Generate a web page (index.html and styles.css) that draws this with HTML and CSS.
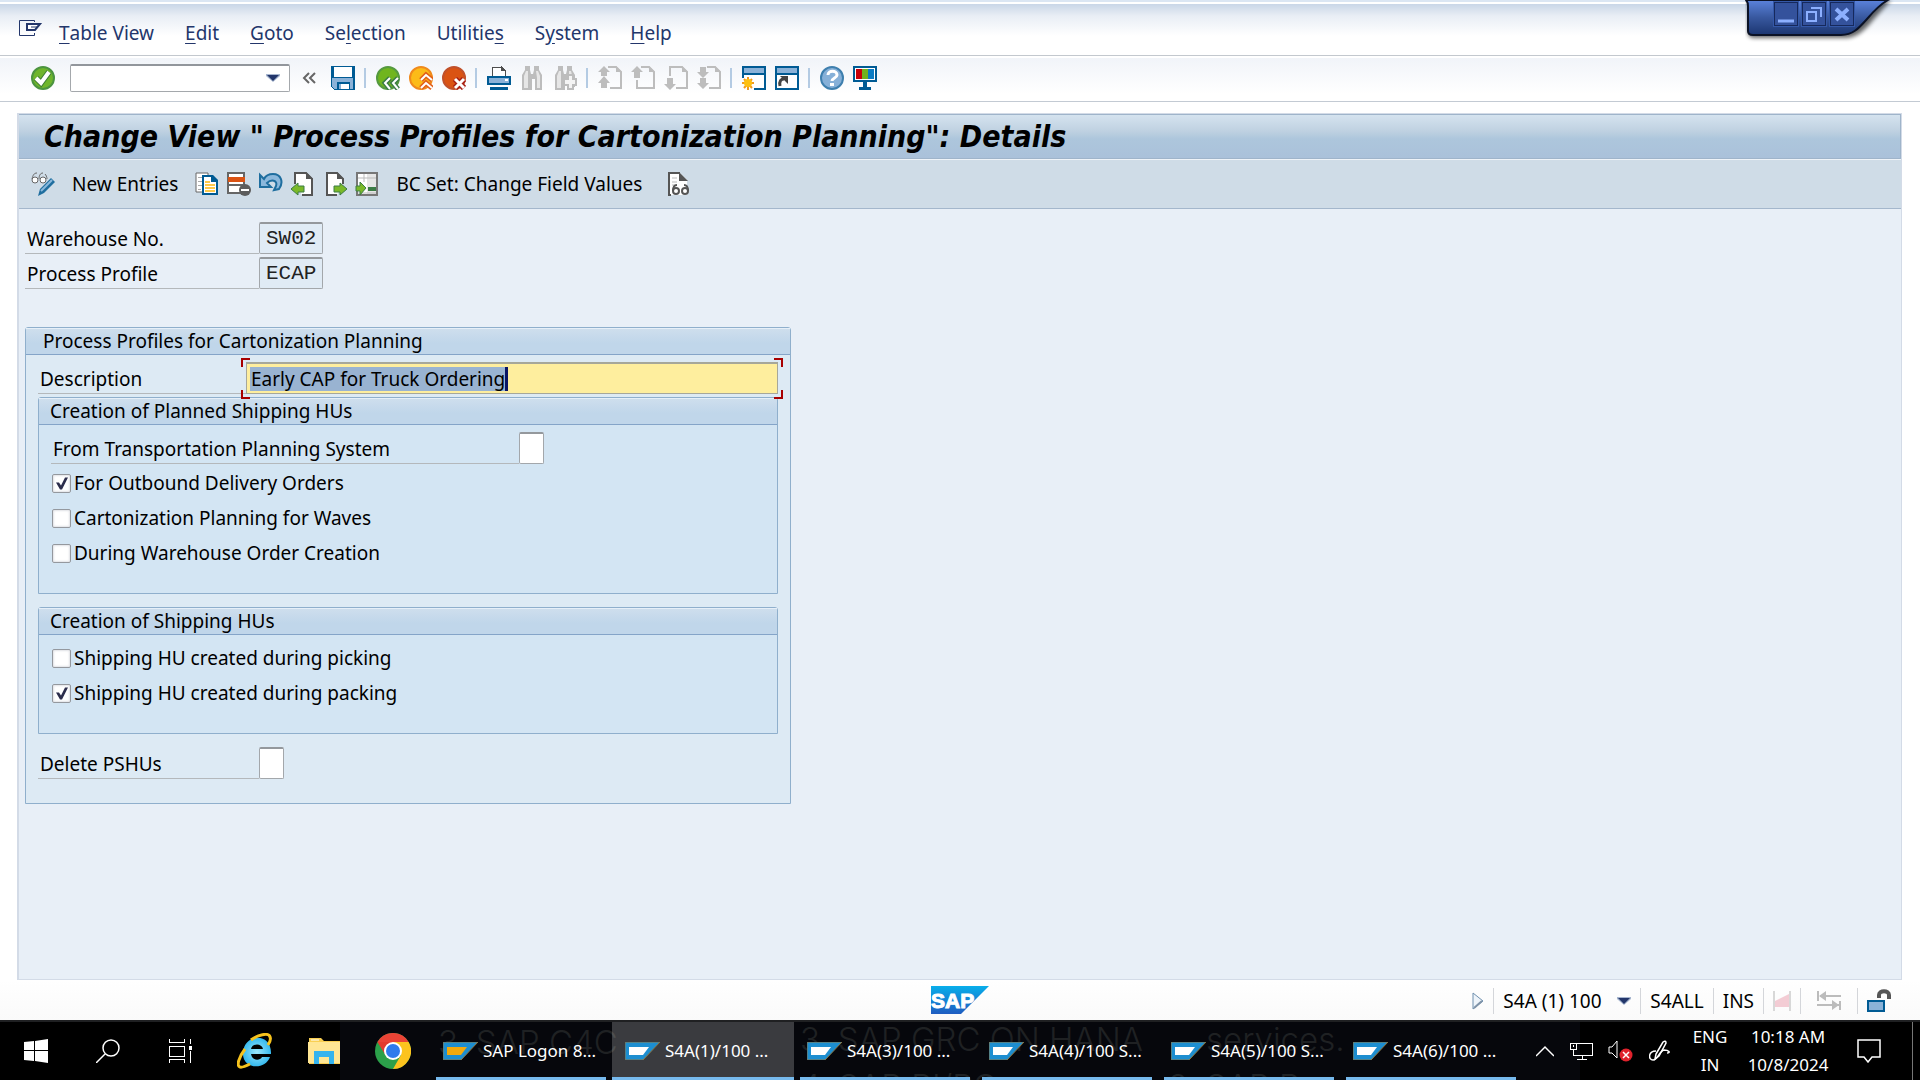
FILE: index.html
```
<!DOCTYPE html>
<html lang="en">
<head>
    <meta charset="UTF-8">
    <meta name="viewport" content="width=device-width, initial-scale=1.0">
    <title>Change View " Process Profiles for Cartonization Planning": Details</title>
    <link rel="stylesheet" href="styles.css">
</head>
<body>
    <main class="sap-window">
        <nav class="menu-bar">
            <button class="menu-icon" aria-label="Window menu">
                <svg width="24" height="18" viewBox="0 0 24 18"><path d="M15.500 3V1.500h-15v15h15V14" fill="none" stroke="#23366b" stroke-width="1"/><path d="M8 5h13l-5 6H8z" fill="#fff" stroke="#23366b" stroke-width="2"/><path d="M12 8h6" stroke="#23366b" stroke-width="1"/></svg>
            </button>
            <button><u>T</u>able View</button>
            <button><u>E</u>dit</button>
            <button><u>G</u>oto</button>
            <button>Se<u>l</u>ection</button>
            <button>Utilitie<u>s</u></button>
            <button>S<u>y</u>stem</button>
            <button><u>H</u>elp</button>
        </nav>

        <div class="toolbar">
            <button aria-label="Enter">
                <svg width="24" height="24" viewBox="0 0 24 24"><circle cx="12" cy="12" r="11" fill="#6fb52c" stroke="#4c9440" stroke-width="2"/><path d="M5 12l5 5 8-11" fill="none" stroke="#3c7c34" stroke-width="6"/><path d="M5 12l5 5 8-11" fill="none" stroke="#fff" stroke-width="4"/></svg>
            </button>
            <div class="command">
                <input type="text" aria-label="Command">
                <button aria-label="Command history">
                    <svg width="14" height="8" viewBox="0 0 14 8"><path d="M0 0h14v2L7 8 0 2z" fill="#a7b6cf"/><path d="M1 1h12L7 7z" fill="#23366b"/></svg>
                </button>
            </div>
            <button class="narrow" aria-label="Hide command field">
                <svg width="14" height="12" viewBox="0 0 14 12"><path d="M7 1L2 6l5 5M13 1L8 6l5 5" fill="none" stroke="#666" stroke-width="2"/></svg>
            </button>
            <button class="save" aria-label="Save">
                <svg width="24" height="24" viewBox="0 0 24 24" shape-rendering="crispEdges"><path d="M0 0h24v24H3l-3-3z" fill="#005b94"/><path d="M1 12h21v11H3l-2-2z" fill="#8bb2d8"/><path d="M3 1h18v10H3z" fill="#fff"/><path d="M6 16h13v8H6z" fill="#005b94"/><path d="M8 18h10v5H8z" fill="#fff"/><path d="M8 18h2v5H8z" fill="#8bb2d8"/></svg>
            </button>
            <span class="sep"></span>
            <button aria-label="Back">
                <svg width="24" height="24" viewBox="0 0 24 24"><circle cx="12" cy="12" r="11" fill="#70b51e" stroke="#559a3f" stroke-width="2"/><path d="M14 12l-5 5 5 6M22 12l-5 5 5 6" fill="none" stroke="#3c7c45" stroke-width="5"/><path d="M14 12l-5 5 5 6M22 12l-5 5 5 6" fill="none" stroke="#fff" stroke-width="2"/></svg>
            </button>
            <button aria-label="Exit">
                <svg width="24" height="24" viewBox="0 0 24 24"><circle cx="12" cy="12" r="11" fill="#fcbb18" stroke="#f08a1c" stroke-width="2"/><path d="M12 14l5-5 6 5M12 22l5-5 6 5" fill="none" stroke="#e2601a" stroke-width="5"/><path d="M12 14l5-5 6 5M12 22l5-5 6 5" fill="none" stroke="#fff" stroke-width="2"/></svg>
            </button>
            <button aria-label="Cancel">
                <svg width="24" height="24" viewBox="0 0 24 24"><circle cx="12" cy="12" r="11" fill="#da5313" stroke="#c0502a" stroke-width="2"/><path d="M13 13l9 9M22 13l-9 9" stroke="#a81f14" stroke-width="6"/><path d="M13 13l9 9M22 13l-9 9" stroke="#fff" stroke-width="3"/></svg>
            </button>
            <span class="sep"></span>
            <button aria-label="Print">
                <svg width="24" height="24" viewBox="0 0 24 24" shape-rendering="crispEdges"><path d="M5 10V1h9l4 4v5" fill="#fff" stroke="#4d4d4d" stroke-width="1"/><path d="M14 0v5h5z" fill="#4d4d4d"/><path d="M0 10h24v9H0z" fill="#005b94"/><path d="M2 12h20v5H2z" fill="#8bb2d8"/><path d="M18 13h3v2h-3z" fill="#fff"/><path d="M3 21h18v3H3z" fill="#005b94"/></svg>
            </button>
            <button aria-label="Find" disabled>
                <svg width="24" height="24" viewBox="0 0 24 24"><path d="M5 0h5v4l1 4h2l1-4V0h5v4l3 5v15h-7V13h-3v11H2V9l3-5z" fill="#bdbdbd"/><path d="M6 5h2v17H4V10zM16 5h2l2 5v12h-3V12z" fill="#e6e6e6"/></svg>
            </button>
            <button aria-label="Find next" disabled>
                <svg width="24" height="24" viewBox="0 0 24 24"><path d="M5 0h5v4l1 4h2l1-4V0h5v4l3 5v12h-7v-8h-3v11H2V9l3-5z" fill="#bdbdbd"/><path d="M6 5h2v17H4V10zM16 5h2l1 4h-3z" fill="#e6e6e6"/><path d="M15 9h5v4h3v6h-3v4h-5v-4h-4v-6h4z" fill="#f4f4f4" stroke="#bdbdbd" stroke-width="2"/></svg>
            </button>
            <span class="sep"></span>
            <button aria-label="First page" disabled>
                <svg width="24" height="24" viewBox="0 0 24 24"><path d="M10 1h8l5 5v16H12" fill="none" stroke="#bdbdbd" stroke-width="2"/><path d="M18 0v6h6zM6 0l6 6H9v4H3V6H0zM6 10l6 7H9v5H3v-5H0z" fill="#bdbdbd"/></svg>
            </button>
            <button aria-label="Previous page" disabled>
                <svg width="24" height="24" viewBox="0 0 24 24"><path d="M10 1h8l5 5v16H6v-8" fill="none" stroke="#bdbdbd" stroke-width="2"/><path d="M18 0v6h6zM6 0l6 6H9v6H3V6H0z" fill="#bdbdbd"/></svg>
            </button>
            <button aria-label="Next page" disabled>
                <svg width="24" height="24" viewBox="0 0 24 24"><path d="M6 10V1h12l5 5v16H12" fill="none" stroke="#bdbdbd" stroke-width="2"/><path d="M18 0v6h6zM3 12h6v6h3l-6 6-6-6h3z" fill="#bdbdbd"/></svg>
            </button>
            <button aria-label="Last page" disabled>
                <svg width="24" height="24" viewBox="0 0 24 24"><path d="M10 1h8l5 5v16H12" fill="none" stroke="#bdbdbd" stroke-width="2"/><path d="M18 0v6h6zM3 1h6v5h3l-6 6-6-6h3zM3 12h6v5h3l-6 6-6-6h3z" fill="#bdbdbd"/></svg>
            </button>
            <span class="sep"></span>
            <button aria-label="Create new session">
                <svg width="24" height="24" viewBox="0 0 24 24"><path d="M0 0h24v24H12v-2h10V9H2v3H0z" fill="#005b94" shape-rendering="crispEdges"/><path d="M2 2h20v5H2z" fill="#8bb2d8"/><path d="M2 9h20v13H2z" fill="#fff"/><path d="M0 8h24v1H0z" fill="#005b94"/><g stroke="#f29a1c" stroke-width="2"><path d="M6 11v13M0 17h12M2 13l8 9M10 13l-8 9"/></g><circle cx="6" cy="17" r="4" fill="#fdc010"/></svg>
            </button>
            <button aria-label="Generate shortcut">
                <svg width="24" height="24" viewBox="0 0 24 24"><path d="M0 0h24v24H0z" fill="#005b94"/><path d="M2 2h20v5H2z" fill="#8bb2d8"/><path d="M2 9h20v13H2z" fill="#fff"/><path d="M5 20c-1-5 1-7 4-7" fill="none" stroke="#444" stroke-width="3"/><path d="M5 10h8v8z" fill="#444"/></svg>
            </button>
            <span class="sep"></span>
            <button aria-label="Help">
                <svg width="24" height="24" viewBox="0 0 24 24"><circle cx="12" cy="12" r="11" fill="#86b0d8" stroke="#3e7fae" stroke-width="2"/><path d="M8 9c0-5 9-5 9 0 0 3-5 3-5 6" fill="none" stroke="#fff" stroke-width="3"/><path d="M10 17h4v3h-4z" fill="#fff"/></svg>
            </button>
            <button aria-label="Customize local layout">
                <svg width="24" height="24" viewBox="0 0 24 24" shape-rendering="crispEdges"><path d="M0 0h24v16H0z" fill="#005b94"/><path d="M2 2h20v12H2z" fill="#fff"/><path d="M3 3h6v10H3z" fill="#c8000a"/><path d="M9 3h6v10H9z" fill="#72b31e"/><path d="M15 3h6v10h-6z" fill="#0a7cc4"/><path d="M10 16h4v5h-4zM6 21h12v3H6z" fill="#005b94"/></svg>
            </button>
        </div>

        <section class="screen">
            <h1>Change View " Process Profiles for Cartonization Planning": Details</h1>
            <div class="app-toolbar">
                <button aria-label="Display/Change">
                    <svg width="24" height="24" viewBox="0 0 24 24"><g fill="none" stroke="#666"><path d="M1 7c1-4 2-6 5-6M8 7c0-3 1-6 4-6M16 7c0-2-1-4-2-5"/><circle cx="4" cy="8" r="3" fill="#fff"/><circle cx="12" cy="8" r="3" fill="#fff"/></g><path d="M7 24l2-7L20 6l4 4-11 11z" fill="#1f6e9f"/><path d="M10 19L21 8" stroke="#8bb8dc" stroke-width="2"/></svg>
                </button>
                <button class="text-button">New Entries</button>
                <button aria-label="Copy as">
                    <svg width="24" height="24" viewBox="0 0 24 24"><path d="M1 1h12v19H1z" fill="#fff" stroke="#666"/><path d="M3 5.500h4M3 9.500h4M3 13.500h4M3 17.500h3" stroke="#aaa"/><path d="M8 4h9l5 5v13H8z" fill="#fff" stroke="#005b94" stroke-width="2"/><path d="M16 3h2l5 5v2h-7z" fill="#005b94"/><path d="M10 10h5M10 13h10M10 16h10M10 19h10" stroke="#fdc94a" stroke-width="2"/></svg>
                </button>
                <button aria-label="Delete">
                    <svg width="24" height="24" viewBox="0 0 24 24"><path d="M1 1h16v20H1z" fill="#fff" stroke="#666" stroke-width="2"/><path d="M1 5h17v5H1z" fill="#da5313"/><path d="M1 13h16" stroke="#666" stroke-width="2"/><circle cx="18" cy="18" r="6" fill="#5c5c5c"/><path d="M14 18h8" stroke="#fff" stroke-width="2"/></svg>
                </button>
                <button aria-label="Undo change">
                    <svg width="24" height="24" viewBox="0 0 24 24"><path d="M1 3v12h11L8 11c4-4 11-3 9 3l-2 4 5-1c5-7 2-15-6-15-4 0-7 1-9 5z" fill="#8bb8dc" stroke="#1f6e9f" stroke-width="2"/></svg>
                </button>
                <button aria-label="Previous entry">
                    <svg width="24" height="24" viewBox="0 0 24 24"><path d="M4 12V1h11l6 6v16H11" fill="#fff" stroke="#555" stroke-width="2"/><path d="M15 0v7h7z" fill="#555"/><path d="M0 17l7-6v3h6v6H7v3z" fill="#7ab929" stroke="#3c7c45"/></svg>
                </button>
                <button aria-label="Next entry">
                    <svg width="24" height="24" viewBox="0 0 24 24"><path d="M20 12V7l-6-6H4v22h10" fill="#fff" stroke="#555" stroke-width="2"/><path d="M14 0v7h7z" fill="#555"/><path d="M24 17l-7-6v3h-6v6h6v3z" fill="#7ab929" stroke="#3c7c45"/></svg>
                </button>
                <button aria-label="Other entry">
                    <svg width="24" height="24" viewBox="0 0 24 24"><path d="M2 1h20v22H2z" fill="#fff" stroke="#777" stroke-width="2"/><path d="M12 2h9v20h-9z" fill="#e6e6e6"/><path d="M3 6h18M9 2v8M3 21h18" stroke="#bbb"/><path d="M13 17h8" stroke="#3c7c45" stroke-width="4"/><path d="M11 16L5 10v4H1v5h4v4z" fill="#7ab929" stroke="#3c7c45"/></svg>
                </button>
                <button class="text-button">BC Set: Change Field Values</button>
                <button class="display-set" aria-label="Display BC Set">
                    <svg width="24" height="24" viewBox="0 0 24 24"><path d="M2 1h11l7 7v15H2z" fill="#fff"/><path d="M13 1H2v22h2" fill="none" stroke="#555" stroke-width="2"/><path d="M12 0l9 9h-9z" fill="#555"/><path d="M5 6h5M5 10h5M5 13h4" stroke="#bbb"/><g fill="#fff" stroke="#555" stroke-width="2"><circle cx="9" cy="19" r="3"/><circle cx="18" cy="19" r="3"/><path d="M6 19c0-4 1-6 4-6M21 19c0-4-1-6-4-6" fill="none"/></g></svg>
                </button>
            </div>

            <form class="content">
                <div class="row">
                    <label class="key" for="warehouse">Warehouse No.</label>
                    <input class="field code" id="warehouse" type="text" value="SW02" readonly>
                </div>
                <div class="row">
                    <label class="key" for="profile">Process Profile</label>
                    <input class="field code" id="profile" type="text" value="ECAP" readonly>
                </div>

                <section class="group">
                    <h2>Process Profiles for Cartonization Planning</h2>
                    <div class="group-body">
                        <div class="row">
                            <label class="description" for="description">Description</label>
                            <div class="active-field">
                                <input id="description" type="text" value="Early CAP for Truck Ordering">
                                <span class="caret"></span>
                                <i class="mark top-left"></i>
                                <i class="mark top-right"></i>
                                <i class="mark bottom-left"></i>
                                <i class="mark bottom-right"></i>
                            </div>
                        </div>

                        <section class="group sub">
                            <h2>Creation of Planned Shipping HUs</h2>
                            <div class="group-body">
                                <div class="row">
                                    <label class="transport" for="transport">From Transportation Planning System</label>
                                    <input class="field flag" id="transport" type="text">
                                </div>
                                <label class="check"><input type="checkbox" checked>For Outbound Delivery Orders</label>
                                <label class="check"><input type="checkbox">Cartonization Planning for Waves</label>
                                <label class="check"><input type="checkbox">During Warehouse Order Creation</label>
                            </div>
                        </section>

                        <section class="group sub spaced">
                            <h2>Creation of Shipping HUs</h2>
                            <div class="group-body">
                                <label class="check"><input type="checkbox">Shipping HU created during picking</label>
                                <label class="check"><input type="checkbox" checked>Shipping HU created during packing</label>
                            </div>
                        </section>

                        <div class="row spaced">
                            <label class="delete" for="delete">Delete PSHUs</label>
                            <input class="field flag" id="delete" type="text">
                        </div>
                    </div>
                </section>
            </form>
        </section>

        <div class="status-bar">
            <svg class="sap-logo" width="58" height="28" viewBox="0 0 58 28">
                <defs><linearGradient id="logo" x2="0" y2="1"><stop offset="0" stop-color="#08aeea"/><stop offset="1" stop-color="#1f5cc0"/></linearGradient></defs>
                <path d="M0 0h58L30 28H0z" fill="url(#logo)"/>
                <text x="0" y="22" class="logo-text">SAP</text>
            </svg>
            <div class="status-info">
                <button aria-label="Expand">
                    <svg width="12" height="18" viewBox="0 0 12 18"><path d="M1 1v16L11 9z" fill="#eef4fa" stroke="#6f8fae"/><path d="M2 16l8-7" stroke="#7f93a8" stroke-width="2"/></svg>
                </button>
                <button class="system">S4A (1) 100
                    <svg width="14" height="8" viewBox="0 0 14 8"><path d="M0 0h14v2L7 8 0 2z" fill="#a7b6cf"/><path d="M1 1h12L7 7z" fill="#23366b"/></svg>
                </button>
                <span>S4ALL</span>
                <span>INS</span>
                <span>
                    <svg width="18" height="20" viewBox="0 0 18 20"><path d="M1 0v20M17 0v20" stroke="#d8d8d8" stroke-width="2"/><path d="M2 10L16 3v13H2z" fill="#f3ccd4"/></svg>
                </span>
                <span class="wide">
                    <svg width="24" height="20" viewBox="0 0 24 20"><path d="M1 0v10M23 10v9M3 5h21M0 14h22" stroke="#bcbcbc" stroke-width="2"/><path d="M9 0v10L2 5zM15 9v10l7-5z" fill="#bcbcbc"/></svg>
                </span>
                <span class="lock">
                    <svg width="24" height="24" viewBox="0 0 24 24"><path d="M12 9V6c0-5 10-5 10 0v4" fill="none" stroke="#555" stroke-width="4"/><path d="M1 12h16v10H1z" fill="#8bb2d8" stroke="#005b94" stroke-width="2"/></svg>
                </span>
            </div>
        </div>

        <div class="window-tab">
            <svg class="tab-shape" width="150" height="44" viewBox="0 0 150 44">
                <defs>
                    <linearGradient id="tab" x2="0" y2="1"><stop offset="0" stop-color="#5b83dd"/><stop offset=".5" stop-color="#38589f"/><stop offset="1" stop-color="#1b3570"/></linearGradient>
                    <filter id="shade" x="-10%" y="-10%" width="120%" height="140%"><feGaussianBlur stdDeviation="2"/></filter>
                </defs>
                <path d="M3 0v34q1 4 6 4h91c12 0 20-8 28-18l18-20z" fill="#000" opacity=".6" filter="url(#shade)"/>
                <path d="M1 0q2 2 2 6v25q0 4 5 4h88c12 0 18-7 26-16 6-7 12-14 21-19z" fill="url(#tab)" stroke="#0b1226" stroke-width="2"/>
            </svg>
            <div class="tab-buttons">
                <button aria-label="Minimize"><svg width="20" height="20" viewBox="0 0 20 20"><path d="M2 17h16" stroke="#8db0ff" stroke-width="3"/></svg></button>
                <button aria-label="Restore"><svg width="20" height="20" viewBox="0 0 20 20"><path d="M7 4h10v9M3 8h9v9H3z" fill="none" stroke="#8db0ff" stroke-width="2"/></svg></button>
                <button aria-label="Close"><svg width="20" height="20" viewBox="0 0 20 20"><path d="M4 5l12 11M16 5L4 16" stroke="#8db0ff" stroke-width="4"/></svg></button>
            </div>
        </div>
    </main>

    <footer class="taskbar">
        <div class="backdrop" aria-hidden="true">
            <span class="ghost ghost-1">3. SAP C4C</span>
            <span class="ghost ghost-2">3. SAP GRC ON HANA</span>
            <span class="ghost ghost-3">services.</span>
            <span class="ghost ghost-4">4. SAP PI/PO</span>
            <span class="ghost ghost-5">3. SAP B</span>
        </div>
        <div class="launchers">
            <button aria-label="Start">
                <svg width="24" height="24" viewBox="0 0 24 24"><path d="M0 3l10-1v9H0zM11 2l13-2v11H11zM0 12h10v10L0 21zM11 12h13v12l-13-2z" fill="#fff"/></svg>
            </button>
            <button aria-label="Search">
                <svg width="24" height="24" viewBox="0 0 24 24"><circle cx="15" cy="9" r="8" fill="none" stroke="#fff" stroke-width="1.500"/><path d="M9 15l-9 9" stroke="#fff" stroke-width="1.500"/></svg>
            </button>
            <button aria-label="Task View">
                <svg width="24" height="24" viewBox="0 0 24 24" fill="none" stroke="#fff" shape-rendering="crispEdges"><path d="M1 0v3h15V0M1 24v-4h15v4M1 7h15v10H1zM22 0v5M22 12v12"/><path d="M21 7h3v3h-3z" fill="#fff"/></svg>
            </button>
            <button aria-label="Internet Explorer">
                <svg width="36" height="36" viewBox="0 0 36 36"><defs><radialGradient id="ie"><stop offset="0" stop-color="#9be6fb"/><stop offset="1" stop-color="#36b9ee"/></radialGradient></defs><path fill-rule="evenodd" d="M34 21H14c1 7 9 7 11 3h8c-5 14-28 12-27-4C7 0 35-1 34 21zM14 16h12c-1-6-11-6-12 0z" fill="url(#ie)"/><path d="M14 7C20 2 32-1 33 4c1 2 0 5-2 8M8 16C2 24-1 33 3 34c2 1 6-1 10-3" fill="none" stroke="#f6c21c" stroke-width="3"/></svg>
            </button>
            <button aria-label="File Explorer">
                <svg width="32" height="28" viewBox="0 0 32 28"><path d="M1 1h12l3 3h16v23H1z" fill="#f9cf52"/><path d="M0 5h32v21H0z" fill="#ffe694"/><path d="M3 3h8" stroke="#fff" stroke-width="1"/><path d="M6 14h20v13h-5v-7H11v7H6z" fill="#35b4ee"/></svg>
            </button>
            <button aria-label="Chrome">
                <svg width="36" height="36" viewBox="0 0 36 36"><circle cx="18" cy="18" r="18" fill="#2ba04a"/><path d="M18 18L2.400 9A18 18 0 0 1 33.600 9z" fill="#ea4335"/><path d="M18 9h15.600A18 18 0 0 1 18 36l8-14z" fill="#fcc31e"/><path d="M2.400 9l8 13 8-13z" fill="#e33b2e"/><circle cx="18" cy="18" r="9" fill="#fff"/><circle cx="18" cy="18" r="7" fill="#2f7bec"/></svg>
            </button>
        </div>
        <div class="tasks">
            <button class="task">
                <svg width="35" height="18" viewBox="0 0 35 18"><path d="M0 0h35L18 18H0z" fill="#1d8ed0" stroke="#8a7440"/><path d="M4 5h20l-6 8H4z" fill="#f2a90c"/></svg>SAP Logon 8...
            </button>
            <button class="task active">
                <svg width="35" height="18" viewBox="0 0 35 18"><path d="M0 0h35L18 18H0z" fill="#1d8ed0" stroke="#8a7440"/><path d="M4 5h20l-6 8H4z" fill="#fff"/></svg>S4A(1)/100 ...
            </button>
            <button class="task">
                <svg width="35" height="18" viewBox="0 0 35 18"><path d="M0 0h35L18 18H0z" fill="#1d8ed0" stroke="#8a7440"/><path d="M4 5h20l-6 8H4z" fill="#fff"/></svg>S4A(3)/100 ...
            </button>
            <button class="task">
                <svg width="35" height="18" viewBox="0 0 35 18"><path d="M0 0h35L18 18H0z" fill="#1d8ed0" stroke="#8a7440"/><path d="M4 5h20l-6 8H4z" fill="#fff"/></svg>S4A(4)/100 S...
            </button>
            <button class="task">
                <svg width="35" height="18" viewBox="0 0 35 18"><path d="M0 0h35L18 18H0z" fill="#1d8ed0" stroke="#8a7440"/><path d="M4 5h20l-6 8H4z" fill="#fff"/></svg>S4A(5)/100 S...
            </button>
            <button class="task">
                <svg width="35" height="18" viewBox="0 0 35 18"><path d="M0 0h35L18 18H0z" fill="#1d8ed0" stroke="#8a7440"/><path d="M4 5h20l-6 8H4z" fill="#fff"/></svg>S4A(6)/100 ...
            </button>
        </div>
        <div class="tray">
            <button aria-label="Show hidden icons">
                <svg width="18" height="12" viewBox="0 0 18 12"><path d="M0 11l9-9 9 9" fill="none" stroke="#fff" stroke-width="1.500"/></svg>
            </button>
            <button aria-label="Network">
                <svg width="24" height="20" viewBox="0 0 24 20" fill="none" stroke="#fff" shape-rendering="crispEdges"><path d="M7 2h16v12H4V9M13 14v4M8 18h10M1 2h6v6H1zM4 4v2"/></svg>
            </button>
            <button aria-label="Volume muted">
                <svg width="26" height="22" viewBox="0 0 26 22"><path d="M1 7h3l5-6v17l-5-5H1z" fill="none" stroke="#fff"/><circle cx="18" cy="15" r="6.500" fill="#e0222c"/><path d="M15 12l6 6M21 12l-6 6" stroke="#fff" stroke-width="1.500"/></svg>
            </button>
            <button aria-label="Windows Ink">
                <svg width="22" height="22" viewBox="0 0 22 22" fill="none" stroke="#fff" stroke-width="1.500"><path d="M7 14L14 2q3-2 3 1l-7 13-4 3z"/><path d="M7 11c-8 0-8 9-3 9 5 0 6-9 11-10 5 0 7 3 3 3"/></svg>
            </button>
            <div class="language">ENG<br>IN</div>
            <div class="clock">10:18 AM<br>10/8/2024</div>
            <button aria-label="Notifications">
                <svg width="24" height="24" viewBox="0 0 24 24"><path d="M1 1h22v17h-8l-4 5-4-5H1z" fill="none" stroke="#fff" stroke-width="1.500"/></svg>
            </button>
            <span class="show-desktop"></span>
        </div>
    </footer>
</body>
</html>
```
FILE: styles.css
```
* {
    box-sizing: border-box;
}

body {
    margin: 0;
    min-height: 100vh;
    display: flex;
    flex-direction: column;
    font-family: "Noto Sans", Tahoma, sans-serif;
    font-size: 19px;
    line-height: 26px;
    color: #000;
    background: #fff;
}

button {
    display: flex;
    align-items: center;
    padding: 0;
    border: none;
    background: none;
    font: inherit;
    color: inherit;
    white-space: nowrap;
}

svg {
    display: block;
    flex: none;
}

.sap-window {
    position: relative;
    flex: 1;
    display: flex;
    flex-direction: column;
    border-top: 2px solid #dbe6f3;
}

/* menu bar */
.menu-bar {
    display: flex;
    align-items: center;
    gap: 31px;
    height: 54px;
    padding: 6px 19px 0;
    border-top: 2px solid #fff;
    border-bottom: 1px solid #c3c8ce;
    background: linear-gradient(#c9d6e7, #e9eef5 12px, #fff 32px);
    color: #23366b;
}

.menu-icon {
    margin-right: -15px;
    padding-bottom: 10px;
}

.menu-bar u {
    text-underline-offset: 3px;
}

/* standard toolbar */
.toolbar {
    display: flex;
    align-items: center;
    gap: 9px;
    height: 46px;
    padding: 0 31px 4px;
    border-top: 2px solid #fff;
    border-bottom: 1px solid #c3cad3;
    background: linear-gradient(#f1f4f9, #fff 36px);
}

.command {
    display: flex;
    align-items: center;
    width: 220px;
    height: 28px;
    margin-left: 6px;
    padding-right: 9px;
    border: 1px solid #a4a8ac;
    border-top: 2px solid #92969c;
    border-radius: 2px;
    background: #fff;
}

.command input {
    flex: 1;
    min-width: 0;
    border: none;
    background: none;
    font: inherit;
}

.narrow {
    margin: 0 6px 0 3px;
}

.sep {
    width: 2px;
    height: 20px;
    margin-right: 1px;
    background: #b4cbe3;
}

/* screen area */
.screen {
    flex: 1;
    display: flex;
    flex-direction: column;
    margin: 11px 18px 0 17px;
    border: 1px solid #d3dbe7;
    border-left-width: 2px;
    background: #e8eff7;
}

h1 {
    height: 45px;
    margin: 0;
    padding-left: 25px;
    border: 1px solid #9fb4ca;
    border-width: 1px 1px 1px 0;
    background: linear-gradient(#d5e3ef, #bfd1e1 16px, #adc6dc 24px, #aac1da);
    font-family: "DejaVu Sans Condensed", Verdana, sans-serif;
    font-size: 30px;
    font-style: italic;
    line-height: 43px;
}

.app-toolbar {
    display: flex;
    align-items: center;
    gap: 8px;
    height: 50px;
    padding: 0 12px;
    border-top: 1px solid #eef3f8;
    border-bottom: 1px solid #a4b7cc;
    background: #cfdce7;
}

.text-button {
    margin: 0 9px;
}

.display-set {
    margin-left: 8px;
}

.content {
    padding: 13px 6px;
}

.row {
    display: flex;
    height: 32px;
    margin-bottom: 3px;
}

.row label {
    padding: 4px 2px 0;
    border-bottom: 1px solid #b4b8bb;
}

.key {
    width: 234px;
}

.description {
    width: 208px;
}

.transport {
    width: 468px;
}

.delete {
    width: 221px;
}

.field {
    height: 32px;
    border: 1px solid #a3a7ab;
    border-top: 2px solid #94989c;
    border-radius: 2px;
    background: #fff;
    font: inherit;
}

.code {
    width: 64px;
    padding: 0 0 1px 6px;
    background: #e0ebf5;
    color: #222;
    font-family: "Liberation Mono", "Courier New", monospace;
    font-size: 21px;
}

.flag {
    width: 25px;
    padding: 0 3px;
}

/* group boxes */
.group {
    max-width: 766px;
    margin-top: 38px;
    border: 1px solid #8fafcc;
    border-radius: 3px 3px 0 0;
    background: #ddeaf4;
}

.group h2 {
    height: 27px;
    margin: 0;
    padding-left: 17px;
    border-top: 1px solid #e6eff8;
    border-bottom: 1px solid #84a4c8;
    background: linear-gradient(#cedeed, #c0d6ea 14px);
    font-size: 19px;
    font-weight: normal;
    line-height: 25px;
}

.group-body {
    padding: 7px 12px 21px;
}

.group.sub {
    margin-top: 0;
    background: #d3e5f3;
}

.sub h2 {
    padding-left: 11px;
}

.group .spaced {
    margin-top: 13px;
}

.active-field {
    position: relative;
    flex: 1;
    display: flex;
    align-items: center;
    padding-left: 3px;
    border: 2px solid #a6a79a;
    border-width: 2px 1px 1px;
    background: #feee9e;
}

.active-field input {
    field-sizing: content;
    height: 24px;
    padding: 0 0 0 1px;
    border: none;
    background: #99b3d1;
    font: inherit;
}

.caret {
    width: 3px;
    height: 24px;
    background: #0a1464;
}

.mark {
    position: absolute;
    width: 9px;
    height: 9px;
    border: 0 solid #a80000;
}

.top-left {
    top: -6px;
    left: -6px;
    border-width: 2px 0 0 2px;
}

.top-right {
    top: -6px;
    right: -6px;
    border-width: 2px 2px 0 0;
}

.bottom-left {
    bottom: -6px;
    left: -6px;
    border-width: 0 0 2px 2px;
}

.bottom-right {
    bottom: -6px;
    right: -6px;
    border-width: 0 2px 2px 0;
}

.check {
    display: flex;
    align-items: center;
    height: 32px;
    margin-bottom: 3px;
}

.check input {
    appearance: none;
    width: 19px;
    height: 19px;
    margin: 0 3px 0 1px;
    border: 1px solid #94989e;
    border-radius: 2px;
    background: #fff;
    box-shadow: inset 0 0 2px 1px #e0e2e6;
}

.check input:checked::before {
    content: "";
    display: block;
    width: 17px;
    height: 17px;
    background: #2b2d4c;
    clip-path: polygon(3px 8px, 6px 8px, 8px 11px, 12px 3px, 15px 3px, 9px 15px, 7px 15px);
}

/* status bar */
.status-bar {
    display: grid;
    grid-template-columns: 1fr auto 1fr;
    align-items: center;
    height: 40px;
    padding: 0 29px;
    background: linear-gradient(#fff, #fafafa);
}

.sap-logo {
    grid-column: 2;
}

.logo-text {
    fill: #fff;
    stroke: #fff;
    font: bold 21px "Liberation Sans", Arial, sans-serif;
}

.status-info {
    display: flex;
    align-items: center;
    justify-content: flex-end;
    padding-top: 2px;
}

.status-info > * {
    display: flex;
    align-items: center;
    height: 26px;
    padding: 0 9px;
}

.status-info > * + * {
    border-left: 1px solid #d4d6da;
}

.status-info .system {
    justify-content: space-between;
    width: 147px;
}

.status-info .wide {
    padding: 0 16px;
}

.status-info .lock {
    padding-right: 0;
}

/* remote window controls */
.window-tab {
    position: absolute;
    top: -2px;
    right: 25px;
}

.tab-buttons {
    position: absolute;
    top: 2px;
    left: 29px;
    display: flex;
    gap: 4px;
}

.tab-buttons button {
    padding: 1px;
    border: 1px solid #16295c;
    outline: 1px solid #3458a8;
    background: #34529c;
}

/* taskbar */
.taskbar {
    position: relative;
    display: flex;
    height: 60px;
    border-top: 2px solid #1f2022;
    background: #000;
    color: #fff;
    font-size: 17px;
    line-height: 28px;
}

.backdrop {
    position: absolute;
    top: 0;
    bottom: 0;
    left: 340px;
    width: 1240px;
    overflow: hidden;
    background: #06070c;
}

.ghost {
    position: absolute;
    top: -3px;
    color: #1f2123;
    font-family: Inter, sans-serif;
    font-size: 33px;
    font-weight: 300;
    line-height: 40px;
    white-space: nowrap;
}

.ghost-1 {
    top: 0;
    left: 98px;
}

.ghost-2 {
    left: 460px;
}

.ghost-3 {
    left: 866px;
}

.ghost-4 {
    top: 44px;
    left: 460px;
}

.ghost-5 {
    top: 44px;
    left: 828px;
}

.launchers,
.tasks,
.tray {
    position: relative;
    display: flex;
    align-items: center;
}

.launchers {
    width: 430px;
    padding-left: 24px;
}

.launchers button {
    justify-content: center;
    width: 24px;
    margin-right: 48px;
}

.launchers button:nth-child(3) {
    margin-right: 45px;
}

.launchers button:nth-child(n+4) {
    width: 36px;
    margin-right: 34px;
}

.launchers button:nth-child(n+5) {
    margin-left: 1px;
}

.task {
    gap: 5px;
    width: 182px;
    height: 58px;
    padding: 0 7px;
    border: 0 solid transparent;
    border-width: 0 6px;
    background: linear-gradient(#76b9ed, #76b9ed) bottom / 100% 3px no-repeat padding-box;
}

.task.active {
    padding: 0 13px;
    border: none;
    background: linear-gradient(#76b9ed, #76b9ed) bottom / 100% 3px no-repeat rgba(255, 255, 255, .21);
}

.tray {
    flex: 1;
    justify-content: flex-end;
    text-align: center;
}

.tray button {
    margin-right: 15px;
}

.language {
    width: 40px;
    margin: 0 16px 0 4px;
}

.clock {
    width: 84px;
    margin-right: 27px;
}

.show-desktop {
    width: 8px;
    height: 58px;
    margin-left: 16px;
    border-left: 1px solid #777;
}
```
